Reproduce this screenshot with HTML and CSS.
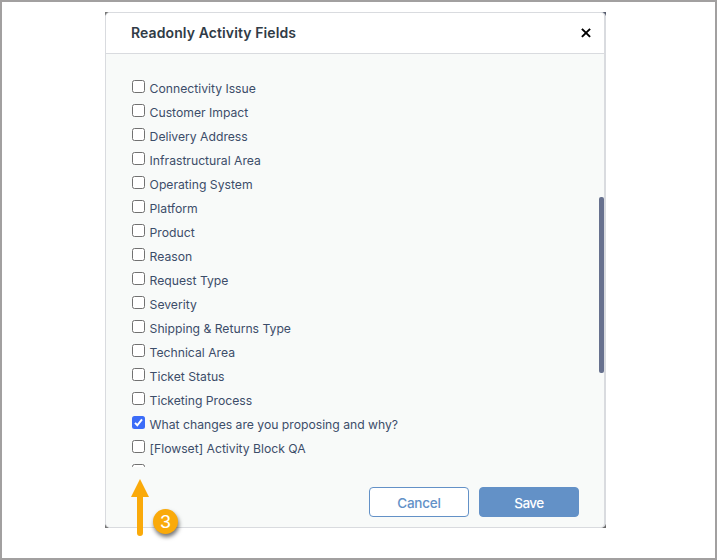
FILE: index.html
```html
<!DOCTYPE html>
<html lang="en">
<head>
<meta charset="utf-8">
<title>Readonly Activity Fields</title>
<link rel="stylesheet" href="styles.css">
</head>
<body>
<main class="page">
  <div class="backdrop">
    <section class="dialog">
      <header class="dialog-header">
        <h1 class="title">Readonly Activity Fields</h1>
        <svg class="close" viewBox="0 0 10 10"><path d="M.9.9 9.1 8.9M9.1.9.9 8.9"/></svg>
      </header>
      <div class="dialog-body">
        <ul class="fields">
          <li><label class="field"><span class="box"></span><span class="name">Connectivity Issue</span></label></li>
          <li><label class="field"><span class="box"></span><span class="name">Customer Impact</span></label></li>
          <li><label class="field"><span class="box"></span><span class="name">Delivery Address</span></label></li>
          <li><label class="field"><span class="box"></span><span class="name">Infrastructural Area</span></label></li>
          <li><label class="field"><span class="box"></span><span class="name">Operating System</span></label></li>
          <li><label class="field"><span class="box"></span><span class="name">Platform</span></label></li>
          <li><label class="field"><span class="box"></span><span class="name">Product</span></label></li>
          <li><label class="field"><span class="box"></span><span class="name">Reason</span></label></li>
          <li><label class="field"><span class="box"></span><span class="name">Request Type</span></label></li>
          <li><label class="field"><span class="box"></span><span class="name">Severity</span></label></li>
          <li><label class="field"><span class="box"></span><span class="name">Shipping &amp; Returns Type</span></label></li>
          <li><label class="field"><span class="box"></span><span class="name">Technical Area</span></label></li>
          <li><label class="field"><span class="box"></span><span class="name">Ticket Status</span></label></li>
          <li><label class="field"><span class="box"></span><span class="name">Ticketing Process</span></label></li>
          <li><label class="field"><span class="box checked"><svg viewBox="0 0 13 13"><path d="M3 6.9 5.3 9.3 10 3.3"/></svg></span><span class="name">What changes are you proposing and why?</span></label></li>
          <li><label class="field"><span class="box"></span><span class="name">[Flowset] Activity Block QA</span></label></li>
          <li><label class="field"><span class="box"></span></label></li>
        </ul>
        <div class="scroll-thumb"></div>
      </div>
      <footer class="dialog-footer">
        <button class="button cancel">Cancel</button>
        <button class="button save">Save</button>
      </footer>
    </section>
  </div>
  <svg class="arrow" viewBox="0 0 18 58"><path d="M9 0 18 18H12V54a3 3 0 0 1-6 0V18H0Z"/></svg>
  <span class="step">3</span>
</main>
</body>
</html>
```

FILE: styles.css
```css
* { box-sizing: border-box; }

body {
  margin: 0;
  font-family: Inter, "Liberation Sans", sans-serif;
  background: #fff;
}

.page {
  position: relative;
  width: 717px;
  height: 560px;
  padding: 10px 0 0 103px;
  border: 2px solid #a2a0a0;
  overflow: hidden;
}

.backdrop {
  width: 501px;
  height: 516px;
  background: linear-gradient(#777, #777) no-repeat 0 0 / 4px 4px,
    linear-gradient(#555b6c, #555b6c) no-repeat 100% 0 / 5px 4px,
    linear-gradient(#777, #777) no-repeat 0 100% / 4px 4px,
    linear-gradient(#686868, #686868) no-repeat 100% 100% / 5px 4px;
}

.dialog {
  display: flex;
  flex-direction: column;
  height: 100%;
  border: 1px solid #d9dbdf;
  border-right-width: 2px;
  border-radius: 5px;
  background: #f8faf9;
  overflow: hidden;
}

.dialog-header {
  display: flex;
  align-items: center;
  justify-content: space-between;
  flex: none;
  height: 41px;
  padding: 0 13px 0 25px;
  border-bottom: 1px solid #d9dbdf;
  background: #fff;
}

.title {
  margin: 0;
  font-size: 14px;
  line-height: 20px;
  font-weight: 600;
  letter-spacing: 0.1px;
  color: #303b46;
}

.close {
  width: 10px;
  height: 10px;
  margin-bottom: 1px;
  fill: none;
  stroke: #000;
  stroke-width: 2;
}

.dialog-body {
  display: flex;
  flex: none;
  justify-content: space-between;
  height: 413px;
  padding-top: 23px;
  overflow: hidden;
}

.fields {
  margin: 0;
  padding: 0 0 0 26px;
  list-style: none;
}

.field {
  display: flex;
  gap: 4.6px;
  height: 24px;
  padding-top: 3px;
}

.box {
  width: 13px;
  height: 13px;
  flex: none;
  border: 1px solid #717171;
  border-radius: 2.5px;
  background: #fff;
}

.box.checked {
  border: 0;
  background: #3b6cf8;
}

.box svg {
  display: block;
  fill: none;
  stroke: #fff;
  stroke-width: 2;
}

.name {
  font-size: 12.2px;
  line-height: 18px;
  letter-spacing: -0.01px;
  white-space: nowrap;
  color: #3c4d69;
}

.scroll-thumb {
  width: 5px;
  height: 176px;
  margin-top: 120px;
  border-radius: 2px;
  background: #67718e;
}

.dialog-footer {
  display: flex;
  justify-content: flex-end;
  gap: 10px;
  padding: 20px 25px 0 0;
}

.button {
  width: 100px;
  height: 30px;
  padding: 2px 0 0;
  border: 1px solid #6391c7;
  border-radius: 4px;
  font: 500 13.5px/20px Inter, sans-serif;
  letter-spacing: -0.2px;
}

.cancel {
  background: #fff;
  color: #6391c7;
}

.save {
  background: #6391c7;
  color: #fff;
  letter-spacing: -0.5px;
}

.arrow {
  position: absolute;
  left: 129px;
  top: 477px;
  width: 18px;
  height: 58px;
  fill: #faaa0a;
}

.step {
  position: absolute;
  left: 151px;
  top: 507px;
  width: 25px;
  height: 25px;
  border-radius: 50%;
  background: #faaa0a;
  box-shadow: 1px 3px 4px rgba(0, 0, 0, 0.55);
  color: #fff;
  font: 19px/25px "Liberation Sans", sans-serif;
  text-align: center;
}
```
